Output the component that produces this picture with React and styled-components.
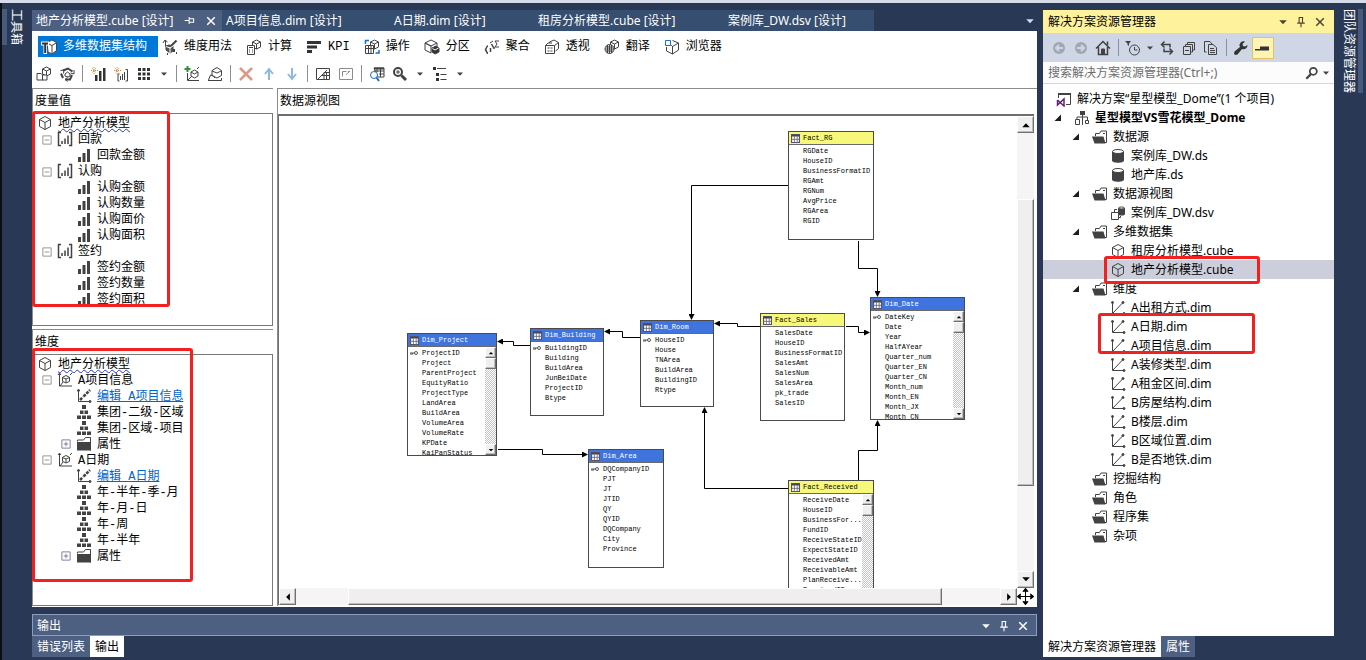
import React from 'react'
import styled, { createGlobalStyle, css } from 'styled-components'

const GlobalStyle = createGlobalStyle`
  * {
    box-sizing: border-box;
  }

  body {
    margin: 0;
    background: #293955;
    color: #000;
    font-family: "Noto Sans", "Noto Sans CJK SC", sans-serif;
    font-size: 12px;
    line-height: 16px;
  }

  button, input {
    font: inherit;
    color: inherit;
    border: 0;
    padding: 0;
    margin: 0;
    background: transparent;
  }

  svg {
    display: block;
    flex: none;
  }
`;

const designerFont = css`
  font-family: "Liberation Mono", "Noto Sans CJK SC", monospace;
`;

/* ---------- shell ---------- */

const Shell = styled.div`
  height: 100vh;
  min-height: 600px;
  display: grid;
  grid-template-columns: 32px minmax(0, 1fr) 291px 32px;
  border-top: 3px solid #d6dbe9;
  background: #293955;
  overflow: hidden;
`;

const Rail = styled.aside`
  display: flex;
  justify-content: space-between;
  align-items: flex-start;
  padding-top: 6px;
  border-left: ${(p) => (p.$left ? '2px solid #0b0f18' : '0')};
`;

const RailTab = styled.button`
  writing-mode: vertical-rl;
  text-orientation: sideways;
  color: #fff;
  white-space: nowrap;
  line-height: 18px;
  padding: 0 ${(p) => (p.$left ? '6px' : '0')} 0 ${(p) => (p.$left ? '0' : '6px')};
  border-${(p) => (p.$left ? 'left' : 'right')}: 5px solid #465a7d;
`;

const Center = styled.main`
  display: flex;
  flex-direction: column;
  min-width: 0;
  min-height: 0;
  padding: 7px 6px 3px 0;
`;

const DocTabs = styled.nav`
  display: flex;
  height: 21px;
  flex: none;
  color: #fff;
`;

const DocTab = styled.button`
  display: flex;
  align-items: center;
  width: ${(p) => p.$width}px;
  padding: 0 4px;
  gap: 10px;
  white-space: nowrap;
  color: #fff;
  background: ${(p) => (p.$active ? '#4d6082' : '#364e6f')};
`;

const TabMenu = styled.button`
  margin-left: auto;
  padding-right: 2px;
  color: #d6dbe9;
`;

const Designer = styled.section`
  display: flex;
  flex-direction: column;
  flex: 1;
  min-height: 0;
  background: #fff;
  ${designerFont}
`;

const ViewTabs = styled.nav`
  display: flex;
  align-items: center;
  height: 31px;
  padding-left: 6px;
`;

const ViewTab = styled.button`
  display: flex;
  align-items: center;
  gap: 6px;
  height: 21px;
  padding: 0 11px 0 3px;
  margin-right: ${(p) => (p.$active ? '1px' : '0')};
  white-space: nowrap;
  color: ${(p) => (p.$active ? '#fff' : '#000')};
  background: ${(p) => (p.$active ? '#0078d7' : 'transparent')};

  span {
    padding-top: 1px;
  }
`;

const Toolbar = styled.div`
  display: flex;
  align-items: center;
  height: 23px;
  margin-bottom: 3px;
`;

const ToolButton = styled.button`
  display: flex;
  align-items: center;
  justify-content: center;
  width: ${(p) => p.$width || 23}px;
  height: 22px;
  color: #424242;
`;

const ToolDivider = styled.span`
  display: flex;
  justify-content: center;
  width: 8px;

  &::before {
    content: '';
    width: 1px;
    height: 17px;
    background: #8a8f9a;
  }
`;

/* ---------- workspace ---------- */

const Workspace = styled.div`
  flex: 1;
  min-height: 0;
  display: grid;
  grid-template-columns: 241px minmax(0, 1fr);
  gap: 4px;
  padding-bottom: 1px;
`;

const SideStack = styled.div`
  display: grid;
  grid-template-rows: 238fr 278fr;
  gap: 3px;
  min-height: 0;
`;

const Pane = styled.section`
  display: flex;
  flex-direction: column;
  min-width: 0;
  min-height: 0;
  border-top: 1px solid #8c8c8c;
  border-left: 1px solid #8c8c8c;
`;

const PaneTitle = styled.h2`
  margin: 0;
  padding: 1px 2px 0;
  flex: none;
  height: ${(p) => (p.$tall ? 25 : 24)}px;
  font-size: 12px;
  line-height: 24px;
  font-weight: 400;
`;

const TreeBox = styled.div`
  position: relative;
  flex: 1;
  min-height: 0;
  border: 1px solid #7a7a7a;
  border-left: 0;
`;

const TreeList = styled.ul`
  list-style: none;
  margin: 0;
  padding: 1px 0 0;
  height: ${(p) => (p.$clip ? '190px' : 'auto')};
  overflow: hidden;
`;

const TreeRow = styled.li`
  display: flex;
  align-items: center;
  height: 16px;
  gap: 5px;
  white-space: nowrap;
  padding-left: ${(p) => (p.$level === 0 ? 4 : p.$level * 19 - 11)}px;

  span, a {
    padding-top: 2px;
  }
`;

const Toggle = styled.button`
  display: flex;
  width: 11px;
  height: 11px;
  visibility: ${(p) => (p.$hidden ? 'hidden' : 'visible')};
`;

const RootLabel = styled.span`
  text-decoration: underline wavy #2a36b8 1px;
  text-underline-offset: 1px;
`;

const TreeLink = styled.a`
  color: #0066cc;
`;

const Mark = styled.div`
  position: absolute;
  left: ${(p) => p.$x}px;
  top: ${(p) => p.$y}px;
  width: ${(p) => p.$w}px;
  height: ${(p) => p.$h}px;
  border: 3px solid #f2201f;
  border-radius: 3px;
  pointer-events: none;
`;

/* ---------- diagram ---------- */

const DiagramFrame = styled.div`
  flex: 1;
  min-height: 0;
  display: grid;
  grid-template-columns: minmax(0, 1fr) 17px;
  grid-template-rows: minmax(0, 1fr) 17px;
  border-top: 2px solid #6e6e6e;
  border-left: 1px solid #6e6e6e;
  margin: 0 3px 1px 0;
`;

const Canvas = styled.div`
  position: relative;
  overflow: hidden;
  background: #fff;
`;

const Links = styled.svg`
  position: absolute;
  inset: 0;
`;

const Node = styled.article`
  position: absolute;
  left: ${(p) => p.$x}px;
  top: ${(p) => p.$y}px;
  width: ${(p) => p.$w}px;
  height: ${(p) => p.$h}px;
  display: flex;
  flex-direction: column;
  border: 1px solid #4a4a4a;
  background: #fff;
  overflow: hidden;
  font-size: 7px;
  line-height: 10px;
`;

const NodeHead = styled.header`
  display: flex;
  align-items: center;
  gap: 3px;
  flex: none;
  height: 13px;
  padding-left: 2px;
  border-bottom: 1px solid #6a6a6a;
  color: ${(p) => (p.$fact ? '#000' : '#fff')};
  background: ${(p) => (p.$fact ? '#f7f77a' : '#3f73de')};
`;

const NodeBody = styled.div`
  display: flex;
  flex: 1;
  min-height: 0;
`;

const Columns = styled.ul`
  flex: 1;
  min-width: 0;
  margin: 0;
  padding: 1px 0 0;
  list-style: none;
`;

const Column = styled.li`
  display: flex;
  align-items: center;
  height: 10px;
  padding-left: ${(p) => (p.$key ? '2px' : '14px')};
  gap: 4px;
  white-space: nowrap;
`;

const ScrollTrack = styled.div`
  display: flex;
  flex-direction: ${(p) => (p.$horizontal ? 'row' : 'column')};
  width: ${(p) => (p.$mini ? '11px' : 'auto')};
  background: ${(p) => (p.$mini
    ? 'conic-gradient(#c4c4c4 25%, #fff 0 50%, #c4c4c4 0 75%, #fff 0) 0 0 / 2px 2px'
    : '#f6f4f5')};
`;

const ScrollButton = styled.button`
  display: flex;
  align-items: center;
  justify-content: center;
  flex: none;
  width: ${(p) => (p.$mini ? 11 : 17)}px;
  height: ${(p) => (p.$mini ? 11 : 17)}px;
  background: #f0f0f0;
  border: 1px solid #fff;
  border-right-color: #6f6f6f;
  border-bottom-color: #6f6f6f;
  box-shadow: inset -1px -1px #bdbdbd;
`;

const ScrollSpace = styled.div`
  flex: ${(p) => p.$size} 0 0;
`;

const ScrollThumb = styled.div`
  flex: ${(p) => (p.$size ? `${p.$size} 0 0` : '0 0 11px')};
  background: #f0eeee;
  border: 1px solid #fff;
  border-right-color: #6f6f6f;
  border-bottom-color: #6f6f6f;
  box-shadow: inset -1px -1px #bdbdbd;
`;

/* ---------- output ---------- */

const OutputBar = styled.section`
  display: flex;
  align-items: center;
  flex: none;
  height: 22px;
  margin-top: 7px;
  padding: 2px 7px 0 4px;
  gap: 7px;
  border: 1px solid #8e9bbc;
  background: #4d6082;
  color: #fff;
`;

const BarTitle = styled.h2`
  margin: 0 auto 0 0;
  font-size: 12px;
  font-weight: 400;
`;

const BarButton = styled.button`
  display: flex;
`;

const ToolTabs = styled.nav`
  display: flex;
  flex: none;
  height: 21px;
`;

const ToolTab = styled.button`
  padding: 0 5px;
  height: 21px;
  color: ${(p) => (p.$active ? '#000' : '#fff')};
  background: ${(p) => (p.$active ? '#fff' : '#4d6082')};
`;

/* ---------- solution explorer ---------- */

const Explorer = styled.section`
  display: flex;
  flex-direction: column;
  min-height: 0;
  padding: 7px 0 3px;
`;

const ExplorerTitle = styled.header`
  display: flex;
  align-items: center;
  flex: none;
  height: 23px;
  padding: 0 8px 0 5px;
  gap: 7px;
  background: #fff29d;
  color: #4b4436;

  h2 {
    color: #000;
  }
`;

const ExplorerTools = styled.div`
  display: flex;
  align-items: center;
  flex: none;
  height: 29px;
  padding-left: 5px;
  background: #cfd6e5;
`;

const PinnedTool = styled(ToolButton)`
  border: 1px solid #e5c365;
  background: #fff4b5;
`;

const SearchBox = styled.label`
  display: flex;
  align-items: center;
  flex: none;
  height: 22px;
  padding: 0 4px 0 5px;
  gap: 3px;
  background: #fcfcfc;
  color: #424242;
  border-bottom: 1px solid #cfd6e5;
`;

const SearchInput = styled.input`
  flex: 1;
  min-width: 0;
  outline: none;

  &::placeholder {
    color: #6d6d6d;
    opacity: 1;
  }
`;

const Solution = styled.div`
  position: relative;
  flex: 1;
  min-height: 0;
  background: #fff;
`;

const SolutionList = styled.ul`
  list-style: none;
  margin: 0;
  padding: 5px 0 0;
`;

const SolutionRow = styled.li`
  display: flex;
  align-items: center;
  height: 19px;
  white-space: nowrap;
  padding-left: ${(p) => (p.$level === 0 ? 13 : p.$level * 18 - 7)}px;
  font-weight: ${(p) => (p.$level === 1 ? 700 : 400)};
  background: ${(p) => (p.$selected ? '#cccedb' : 'transparent')};

  span {
    padding-left: 5px;
  }
`;

const Expander = styled.button`
  display: flex;
  width: 20px;
`;

/* ---------- icons ---------- */

const cube = 'M8 1.5l5.5 3v7L8 14.5l-5.5-3v-7zM2.5 4.5L8 7.5l5.5-3M8 7.5v7';
const smallCube = 'M10.5 1l4 2v5l-4 2-4-2V3zM6.5 3l4 2 4-2M10.5 5v5';

const shapes = {
  cube: <path d={cube} />,
  structure: (
    <>
      <path d="M6 3.5l5-2.5 4.500 2.500v8L11 15l-4-2z" fill="#fff" />
      <path d="M11 6.500V14M7 4.500l4 2 4-2.500" />
      <path d="M0 2.500h8v4H6v8.500H2.500V6.500H0z" fill="#fff" stroke="none" />
      <path d="M1 4.500h6M4.200 4v10" strokeWidth="2" stroke="#333" />
    </>
  ),
  usage: (
    <>
      <path d="M3.500 1.500v6M1 4l2-3 2.500 2" />
      <path d="M14.500 1.500L9 7" strokeWidth="2" />
      <path d="M4 7l3-1 4 1v5l-3 2-4-3z" fill="#555" />
      <path d="M8 8v6M4 7.500l4 1.500 3-2" stroke="#fff" />
      <path d="M12 10v3M14 14h1M5 15h1" strokeWidth="2" />
    </>
  ),
  calc: (
    <>
      <path d={smallCube} />
      <path d="M1.500 6.500h7v9h-7z" fill="#fff" />
      <path d="M3 8.500h4M3 11h1M6 11h1M3 13h1M6 13h1" />
    </>
  ),
  kpi: <path d="M1 2h14v3H1zM1 6.500h10v3H1zM1 11h5v3H1z" fill="#333" stroke="none" />,
  actions: (
    <>
      <path d={smallCube} />
      <path d="M1.500 6.500h8v8h-8zM1.500 9.500h8M4.500 6.500v8M7 6.500v8" fill="#fff" />
      <path d="M1.500 5V1.500H5M15 11v3h-3.500" stroke="#1b6fc0" strokeWidth="1.500" />
    </>
  ),
  partition: (
    <>
      <path d="M7 1l6 3v4M1 4v7l6 3V7zM1 4l6-3M1 4l6 3 6-3" />
      <path d="M8 9l4-2 3 2v4l-4 2-3-2z" fill="#333" />
      <path d="M8.500 9.500L11 11l3.500-2" stroke="#fff" />
    </>
  ),
  aggregate: (
    <>
      <path d="M4 7c-2 0-1 3-3 3.500 2 .5 1 3.500 3 4M7.500 5l2 3.500M6.500 9v4M10 8v2" strokeWidth="1.500" />
      <path d="M15 2h-4l2 3-2 3h4M6 4l3-2" />
    </>
  ),
  perspective: (
    <>
      <path d="M5.500 4V3L10 1l4.500 2.500v6L11.500 12" />
      <path d="M1.500 6.500h9v8h-9z" />
      <path d="M3.500 9h5M3.500 12h5" strokeDasharray="2 1" />
      <path d="M10.500 6.500l4-3M1.500 6.500L4 4h4" />
    </>
  ),
  translate: (
    <>
      <path d={smallCube} />
      <circle cx="5.500" cy="10" r="4.500" fill="#fff" />
      <path d="M1 10h9M5.500 5.500v9M3.500 6v8M7.500 6v8M2 8h7M2 12h7" />
    </>
  ),
  browser: (
    <>
      <path d="M8.500 1.500l6 2.500v7l-6 4-6-3V8M8.500 7v8M8.500 7.500l6-3.500" />
      <path d="M1.500 1.500h5v5h-5z" stroke="#1b6fc0" />
      <path d="M6.500 5.500l2 2" stroke="#1b6fc0" />
    </>
  ),
  newCube: (
    <>
      <path d={smallCube} />
      <path d="M1 7.500h4l1.500 1.500v5H1zM6 9h5v5H6" fill="#fff" />
    </>
  ),
  process: (
    <>
      <path d="M4 4.500l5-2 4.500 3M13 9l-2 4.500H6.500M4 12L2 7.500" strokeWidth="2" />
      <path d="M1.500 4.500l3.500-.5-.5 3.500M15 4v4l-3.500-1M8.500 11.500l-2.500 2 2.500 2M6 8l2.500-2L11 8v2l-2 1-3-1z" />
    </>
  ),
  newGroup: (
    <>
      <path d="M5 9h2.500v6H5zM9 5h2.500v10H9zM13 2h2.500v13H13z" fill="#333" stroke="none" />
      <path d="M4 1v7M1 4.500h7M2 2l4 5M6 2L2 7" stroke="#d08a3a" strokeDasharray="1 1" />
    </>
  ),
  newMeasure: (
    <>
      <path d="M7.500 10v4M9.500 8v6M11.500 6v8M6.500 8H5v7h1.500M12.500 3.500h2V15h-2" />
      <path d="M4 1v7M1 4.500h7M2 2l4 5M6 2L2 7" stroke="#d08a3a" strokeDasharray="1 1" />
    </>
  ),
  grid: <path d="M2 2h3v3H2zM6.5 2h3v3h-3zM11 2h3v3h-3zM2 6.5h3v3H2zM6.5 6.5h3v3h-3zM11 6.5h3v3h-3zM2 11h3v3H2zM6.5 11h3v3h-3zM11 11h3v3h-3z" fill="#333" stroke="none" />,
  addDimension: (
    <>
      <path d="M3.500 7v7.500H15M7 6l3.500-2L14 6v4l-3.500 2L7 10zM7 6l3.500 2L14 6M4 14l4-4M13 3l2-2" />
      <path d="M3.500 0v6M.5 3h6" stroke="#2f8f3a" strokeWidth="2" />
    </>
  ),
  attribute: <path d="M5 4.500l5-3 4.500 3v5L10 12l-5-2.500zM5 5l5 2 4-2M1.500 14l2-5 2.500.5L8 12M1 14.500h13.500V12" />,
  remove: <path d="M2 2l12 12M14 2L2 14" stroke="#d99a8a" strokeWidth="2.500" />,
  up: <path d="M8 14V4M4 8l4-5 4 5" stroke="#8fb8e0" strokeWidth="2" />,
  down: <path d="M8 2v10M4 8l4 5 4-5" stroke="#8fb8e0" strokeWidth="2" />,
  showTables: <path d="M1.500 2.500h13v11h-13zM3 13l9-9M7 9.500h7M9 13V6.500h5M11.500 6v7" />,
  hideTables: <path d="M1.500 2.500h13v11h-13zM4.500 5.500h4M4.500 5.500v5M10 5.500h2M8 8.500L11 6" stroke="#8c8c8c" />,
  find: (
    <>
      <path d="M5 2h10v9H9zM5 5h10M8 2v4M11.500 2v9M10 8h5" />
      <path d="M5 2.500h10" strokeWidth="2" />
      <circle cx="5" cy="9" r="3.500" fill="#fff" stroke="#1b6fc0" />
      <path d="M7.500 11.500L10 15" stroke="#1b6fc0" strokeWidth="2" />
    </>
  ),
  zoom: (
    <>
      <circle cx="6" cy="6" r="4" strokeWidth="2" />
      <path d="M9.500 9.500L14 14" strokeWidth="3" />
      <path d="M4 6h4M6 4v4" />
    </>
  ),
  outline: (
    <>
      <path d="M1 1h3v3H1zM4 7h3v3H4zM4 12h3v3H4z" fill="#333" stroke="none" />
      <path d="M5 2.500h9M8.500 8.500h6M8.500 13.500h6" />
    </>
  ),
  measureGroup: <path d="M4 1.5H1.500v13H4M12 1.500h2.500v13H12M5 10v3M8 7.500V13M11 4.500V13" strokeWidth="1.500" />,
  measure: <path d="M2 10h3v5H2zM6.500 6h3v9h-3zM11 2h3v13h-3z" fill="#424242" stroke="none" />,
  dimension: (
    <>
      <path d="M2.500 2v12H15M1 3l1.500-2L4 3M13 3l2-2" />
      <path d="M9 3.500l3.500 1.800v4L9 11 5.500 9.300v-4zM5.500 5.500L9 7l3.500-1.500M9 7v4M3 14l3-4" />
    </>
  ),
  edit: (
    <>
      <path d="M2.500 2v11.500H14" />
      <circle cx="2.500" cy="2.500" r="1" fill="#424242" />
      <circle cx="14" cy="13.500" r="1" fill="#424242" />
      <path d="M4 12l3-3M7.500 8.500L14 2" strokeWidth="2.500" strokeDasharray="3 1" />
    </>
  ),
  hierarchy: <path d="M6 1h4v4H6zM4 6.5h3.5v3.5H4zM8.500 6.500H12v3.500H8.500zM1 11.500h4v3.500H1zM6 11.500h4v3.500H6zM11 11.500h4v3.500h-4z" fill="#424242" stroke="none" />,
  folder: (
    <>
      <path d="M1.500 5.500V4h6l2-2.500h5v13" fill="#fff" />
      <path d="M1 6h13l1 8.500H1z" fill="#424242" stroke="none" />
    </>
  ),
  openFolder: (
    <>
      <path d="M3.500 7V4.500h4L9 2h5.500v11.500H13M11 4.500h2" fill="#fff" />
      <path d="M0 7.500h11.500l2 7H2.500z" fill="#424242" stroke="none" />
    </>
  ),
  database: (
    <>
      <path d="M2 3.500v9c0 3 12 3 12 0v-9z" fill="#424242" stroke="none" />
      <ellipse cx="8" cy="3.500" rx="5.500" ry="2" fill="#fff" />
    </>
  ),
  view: (
    <>
      <path d="M1.500 7.500h7v7h-7zM8.500 12.500h2V11M4.500 7V4.500H7" />
      <path d="M8 3v6c0 2 7 2 7 0V3z" fill="#424242" stroke="none" />
      <ellipse cx="11.500" cy="3" rx="3" ry="1" fill="#fff" />
    </>
  ),
  axes: (
    <>
      <path d="M2.500 3v10.500H14M3 13L12.500 3" />
      <circle cx="2.500" cy="2.500" r="1" fill="#424242" />
      <circle cx="13" cy="2.500" r="1" fill="#424242" />
      <circle cx="14" cy="13.500" r="1" fill="#424242" />
    </>
  ),
  solution: (
    <>
      <path d="M2.500 7V2.500h12v11H10" />
      <path d="M2 3h13" strokeWidth="2" />
      <path d="M1.500 9v5L8 8v7L1.500 9" stroke="#68217a" strokeWidth="1.500" />
    </>
  ),
  project: (
    <>
      <path d="M6 1h5v4H6z" fill="#424242" stroke="none" />
      <path d="M8.500 5v10M3 9V7h10.500v3M1.500 9.500h4v5h-4zM11.500 10.500h3v3h-3z" />
    </>
  ),
  back: (
    <>
      <circle cx="8" cy="8" r="6" fill="#a3a7b0" stroke="none" />
      <path d="M12 8H5M8 5L5 8l3 3" stroke="#cfd6e5" strokeWidth="2" />
    </>
  ),
  forward: (
    <>
      <circle cx="8" cy="8" r="6" fill="#a3a7b0" stroke="none" />
      <path d="M4 8h7M8 5l3 3-3 3" stroke="#cfd6e5" strokeWidth="2" />
    </>
  ),
  home: (
    <>
      <path d="M1 8.500l7-7 7 7M3.500 7v7.500h9V7M12.500 5V1.500" strokeWidth="1.500" />
      <path d="M6.500 9h3v5h-3z" fill="#424242" />
    </>
  ),
  clock: (
    <>
      <circle cx="9.500" cy="10" r="5" />
      <path d="M9.500 7v3h3" />
      <path d="M0 1h6L4 3.500V6L2.500 5V3.500z" fill="#424242" stroke="none" />
    </>
  ),
  sync: <path d="M2.500 4.500H11v3M5.500 1.500l-3 3 3 3M13.500 11.500H5v-3M10.500 8.500l3 3-3 3" strokeWidth="1.500" />,
  collapse: <path d="M2.500 6.500h7v8h-7zM4 10.500h4M4.500 6V4.500h7V12H10M6.500 4V2.500h7V10H12" />,
  files: <path d="M5.500 4.500H10l3.500 3v7h-8zM7 8.500h4M7 10.500h5M7 12.500h5M3.500 12h-2V1.500H7L9 4" />,
  wrench: <path d="M14.500 5a4 4 0 0 1-5.500 4L4.500 14.500 2 15l-1-1.500.5-2L7 7A4 4 0 0 1 12 1.500L9.500 4l.5 2 2 .5z" fill="#333" stroke="none" />,
  preview: <path d="M0 9h5v1.500H0zM5 6.500h9v4H5z" fill="#333" stroke="none" />,
  search: (
    <>
      <circle cx="9.500" cy="6" r="4" strokeWidth="2" />
      <path d="M7 9l-5.500 5.500" strokeWidth="2.500" />
    </>
  ),
  minus: <path d="M2.5 2.5h11v11h-11zM5 8h6" stroke="#777" />,
  plus: <path d="M2.5 2.5h11v11h-11zM5 8h6M8 5v6" stroke="#5a5a90" />,
  close: <path d="M3 3l10 10M13 3L3 13" stroke="currentColor" strokeWidth="2" />,
  pin: <path d="M5 2h6M5.5 2v7M10 2v7M3 9.500h10M8 10v5" stroke="currentColor" strokeWidth="1.500" />,
  pinSide: <path d="M1 8h6M7.500 3v10M8 5.500h6v5H8" stroke="currentColor" strokeWidth="1.500" />,
  caret: <path d="M2 5h12l-6 6.500z" fill="currentColor" stroke="none" />,
  caretUp: <path d="M2 11.500h12L8 5z" fill="#000" stroke="none" />,
  caretLeft: <path d="M11 2v12L5 8z" fill="#000" stroke="none" />,
  caretRight: <path d="M5 2v12l6-6z" fill="#000" stroke="none" />,
  expanded: <path d="M14 1v13H1z" fill="#1e1e1e" stroke="none" />,
  move: <path d="M8 1v14M1 8h14M5.500 3.500L8 .5l2.500 3M5.500 12.500l2.500 3 2.500-3M3.500 5.500L.5 8l3 2.500M12.500 5.500l3 2.500-3 2.500" stroke="#000" fill="#000" strokeWidth="1" />,
  table: (
    <>
      <path d="M1 1h14v14H1z" fill="#fff" stroke="#556" strokeWidth="2" />
      <path d="M1 3h14" stroke="#445" strokeWidth="3" />
      <path d="M1 9.500h14M6 4v11M11 4v11" stroke="#667" strokeWidth="1.500" />
    </>
  ),
  key: (
    <>
      <circle cx="12" cy="8" r="3" stroke="#555" strokeWidth="2" />
      <path d="M0 8h9M2 8v4M5 8v3" stroke="#555" strokeWidth="2" />
    </>
  ),
};

function Icon({ name, size = 16 }) {
  return (
    <svg width={size} height={size} viewBox="0 0 16 16" fill="none" stroke="#424242" aria-hidden="true">
      {shapes[name]}
    </svg>
  )
}

/* ---------- data ---------- */

const docTabs = [
  { title: '地产分析模型.cube [设计]', width: 190, active: true },
  { title: 'A项目信息.dim [设计]', width: 168 },
  { title: 'A日期.dim [设计]', width: 144 },
  { title: '租房分析模型.cube [设计]', width: 190 },
  { title: '案例库_DW.dsv [设计]', width: 150 },
];

const viewTabs = [
  ['structure', '多维数据集结构'],
  ['usage', '维度用法'],
  ['calc', '计算'],
  ['kpi', 'KPI'],
  ['actions', '操作'],
  ['partition', '分区'],
  ['aggregate', '聚合'],
  ['perspective', '透视'],
  ['translate', '翻译'],
  ['browser', '浏览器'],
];

const tools = [
  'newCube', 'process', '|', 'newGroup', 'newMeasure', 'grid', 'v', '|',
  'addDimension', 'attribute', '|', 'remove', 'up', 'down', '|',
  'showTables', 'hideTables', '|', 'find', 'zoom', 'v', 'outline', 'v',
];

const explorerTools = [
  'back', 'forward', 'home', '|', 'clock', 'v', 'sync', 'collapse', 'files', '|', 'wrench',
];

const measures = [
  { level: 0, icon: 'cube', text: '地产分析模型' },
  { level: 1, icon: 'measureGroup', text: '回款', toggle: 'minus' },
  { level: 2, icon: 'measure', text: '回款金额' },
  { level: 1, icon: 'measureGroup', text: '认购', toggle: 'minus' },
  { level: 2, icon: 'measure', text: '认购金额' },
  { level: 2, icon: 'measure', text: '认购数量' },
  { level: 2, icon: 'measure', text: '认购面价' },
  { level: 2, icon: 'measure', text: '认购面积' },
  { level: 1, icon: 'measureGroup', text: '签约', toggle: 'minus' },
  { level: 2, icon: 'measure', text: '签约金额' },
  { level: 2, icon: 'measure', text: '签约数量' },
  { level: 2, icon: 'measure', text: '签约面积' },
];

const dimensions = [
  { level: 0, icon: 'cube', text: '地产分析模型' },
  { level: 1, icon: 'dimension', text: 'A项目信息', toggle: 'minus' },
  { level: 2, icon: 'edit', text: '编辑 A项目信息', link: true },
  { level: 2, icon: 'hierarchy', text: '集团-二级-区域' },
  { level: 2, icon: 'hierarchy', text: '集团-区域-项目' },
  { level: 2, icon: 'folder', text: '属性', toggle: 'plus' },
  { level: 1, icon: 'dimension', text: 'A日期', toggle: 'minus' },
  { level: 2, icon: 'edit', text: '编辑 A日期', link: true },
  { level: 2, icon: 'hierarchy', text: '年-半年-季-月' },
  { level: 2, icon: 'hierarchy', text: '年-月-日' },
  { level: 2, icon: 'hierarchy', text: '年-周' },
  { level: 2, icon: 'hierarchy', text: '年-半年' },
  { level: 2, icon: 'folder', text: '属性', toggle: 'plus' },
];

const nodes = [
  { name: 'Fact_RG', fact: true, x: 509, y: 15, w: 86, h: 109,
    columns: ['RGDate', 'HouseID', 'BusinessFormatID', 'RGAmt', 'RGNum', 'AvgPrice', 'RGArea', 'RGID'] },
  { name: 'Dim_Date', key: true, scroll: true, x: 591, y: 181, w: 95, h: 123,
    columns: ['DateKey', 'Date', 'Year', 'HalfAYear', 'Quarter_num', 'Quarter_EN', 'Quarter_CN', 'Month_num', 'Month_EN', 'Month_JX', 'Month_CN'] },
  { name: 'Fact_Sales', fact: true, x: 481, y: 197, w: 85, h: 108,
    columns: ['SalesDate', 'HouseID', 'BusinessFormatID', 'SalesAmt', 'SalesNum', 'SalesArea', 'pk_trade', 'SalesID'] },
  { name: 'Dim_Room', key: true, x: 361, y: 204, w: 74, h: 87,
    columns: ['HouseID', 'House', 'TNArea', 'BuildArea', 'BuildingID', 'Rtype'] },
  { name: 'Dim_Building', key: true, x: 251, y: 212, w: 74, h: 88,
    columns: ['BuildingID', 'Building', 'BuildArea', 'JunBeiDate', 'ProjectID', 'Btype'] },
  { name: 'Dim_Project', key: true, scroll: true, x: 128, y: 217, w: 90, h: 123,
    columns: ['ProjectID', 'Project', 'ParentProject', 'EquityRatio', 'ProjectType', 'LandArea', 'BuildArea', 'VolumeArea', 'VolumeRate', 'KPDate', 'KaiPanStatus'] },
  { name: 'Dim_Area', key: true, x: 309, y: 333, w: 76, h: 119,
    columns: ['DQCompanyID', 'PJT', 'JT', 'JTID', 'QY', 'QYID', 'DQCompany', 'City', 'Province'] },
  { name: 'Fact_Received', fact: true, scroll: true, x: 509, y: 364, w: 86, h: 123,
    columns: ['ReceiveDate', 'HouseID', 'BusinessFor...', 'FundID', 'ReceiveStateID', 'ExpectStateID', 'ReceivedAmt', 'ReceivableAmt', 'PlanReceive...', 'ReceivedID'] },
];

const links = [
  'M509 69.5H412.5V203',
  'M579.5 125V152.5H598.5V180',
  'M481 210.5H458.5V207.5H436',
  'M567 210.5H579.5V216.5H590',
  'M361 221.5H343.5V215.5H326',
  'M251 229.5H234.5V225.5H219',
  'M219 333.5H263.5V338.5H308',
  'M509 372.5H425.5V292',
  'M579.5 364V334.5H598.5V305',
];

const solutionItems = [
  { level: 0, icon: 'solution', text: '解决方案“星型模型_Dome”(1 个项目)' },
  { level: 1, icon: 'project', text: '星型模型VS雪花模型_Dome', open: true },
  { level: 2, icon: 'openFolder', text: '数据源', open: true },
  { level: 3, icon: 'database', text: '案例库_DW.ds' },
  { level: 3, icon: 'database', text: '地产库.ds' },
  { level: 2, icon: 'openFolder', text: '数据源视图', open: true },
  { level: 3, icon: 'view', text: '案例库_DW.dsv' },
  { level: 2, icon: 'openFolder', text: '多维数据集', open: true },
  { level: 3, icon: 'cube', text: '租房分析模型.cube' },
  { level: 3, icon: 'cube', text: '地产分析模型.cube', selected: true },
  { level: 2, icon: 'openFolder', text: '维度', open: true },
  { level: 3, icon: 'axes', text: 'A出租方式.dim' },
  { level: 3, icon: 'axes', text: 'A日期.dim' },
  { level: 3, icon: 'axes', text: 'A项目信息.dim' },
  { level: 3, icon: 'axes', text: 'A装修类型.dim' },
  { level: 3, icon: 'axes', text: 'A租金区间.dim' },
  { level: 3, icon: 'axes', text: 'B房屋结构.dim' },
  { level: 3, icon: 'axes', text: 'B楼层.dim' },
  { level: 3, icon: 'axes', text: 'B区域位置.dim' },
  { level: 3, icon: 'axes', text: 'B是否地铁.dim' },
  { level: 2, icon: 'openFolder', text: '挖掘结构' },
  { level: 2, icon: 'openFolder', text: '角色' },
  { level: 2, icon: 'openFolder', text: '程序集' },
  { level: 2, icon: 'openFolder', text: '杂项' },
];

/* ---------- parts ---------- */

function Tools({ items, width, caretWidth }) {
  return items.map((item, i) => {
    if (item === '|') return <ToolDivider key={i} />
    if (item === 'v') {
      return (
        <ToolButton key={i} $width={caretWidth} aria-label="更多">
          <Icon name="caret" size={8} />
        </ToolButton>
      )
    }
    return (
      <ToolButton key={i} $width={width} aria-label={item}>
        <Icon name={item} />
      </ToolButton>
    )
  })
}

function Tree({ items, clip }) {
  return (
    <TreeList $clip={clip}>
      {items.map((item, i) => (
        <TreeRow key={i} $level={item.level}>
          {item.level > 0 && (
            <Toggle $hidden={!item.toggle} aria-label={item.text}>
              <Icon name={item.toggle || 'minus'} size={12} />
            </Toggle>
          )}
          <Icon name={item.icon} />
          {item.level === 0 && <RootLabel>{item.text}</RootLabel>}
          {item.level > 0 && (item.link ? <TreeLink href="#">{item.text}</TreeLink> : <span>{item.text}</span>)}
        </TreeRow>
      ))}
    </TreeList>
  )
}

function TableNode({ node }) {
  return (
    <Node $x={node.x} $y={node.y} $w={node.w} $h={node.h}>
      <NodeHead $fact={node.fact}>
        <Icon name="table" size={9} />
        {node.name}
      </NodeHead>
      <NodeBody>
        <Columns>
          {node.columns.map((column, i) => (
            <Column key={column} $key={node.key && i === 0}>
              {node.key && i === 0 && <Icon name="key" size={8} />}
              {column}
            </Column>
          ))}
        </Columns>
        {node.scroll && (
          <ScrollTrack $mini>
            <ScrollButton $mini aria-label="向上滚动"><Icon name="caretUp" size={6} /></ScrollButton>
            <ScrollThumb />
            <ScrollSpace $size={1} />
            <ScrollButton $mini aria-label="向下滚动"><Icon name="caret" size={6} /></ScrollButton>
          </ScrollTrack>
        )}
      </NodeBody>
    </Node>
  )
}

function Diagram() {
  return (
    <DiagramFrame>
      <Canvas>
        <Links width="100%" height="100%">
          <defs>
            <marker id="arrow" markerWidth="7" markerHeight="6" refX="5" refY="3" orient="auto" markerUnits="userSpaceOnUse">
              <path d="M0 0L6 3L0 6z" fill="#000" />
            </marker>
          </defs>
          {links.map((d) => (
            <path key={d} d={d} fill="none" stroke="#000" markerEnd="url(#arrow)" />
          ))}
        </Links>
        {nodes.map((node) => <TableNode key={node.name} node={node} />)}
      </Canvas>
      <ScrollTrack>
        <ScrollButton aria-label="向上滚动"><Icon name="caretUp" size={10} /></ScrollButton>
        <ScrollSpace $size={66} />
        <ScrollThumb $size={287} />
        <ScrollSpace $size={86} />
        <ScrollButton aria-label="向下滚动"><Icon name="caret" size={10} /></ScrollButton>
      </ScrollTrack>
      <ScrollTrack $horizontal>
        <ScrollButton aria-label="向左滚动"><Icon name="caretLeft" size={10} /></ScrollButton>
        <ScrollSpace $size={52} />
        <ScrollThumb $size={594} />
        <ScrollSpace $size={58} />
        <ScrollButton aria-label="向右滚动"><Icon name="caretRight" size={10} /></ScrollButton>
      </ScrollTrack>
      <Icon name="move" size={17} />
    </DiagramFrame>
  )
}

function App() {
  return (
    <Shell>
      <GlobalStyle />
      <Rail $left>
        <RailTab $left>工具箱</RailTab>
      </Rail>

      <Center>
        <DocTabs>
          {docTabs.map((tab) => (
            <DocTab key={tab.title} $width={tab.width} $active={tab.active}>
              {tab.title}
              {tab.active && (
                <>
                  <Icon name="pinSide" size={11} />
                  <Icon name="close" size={12} />
                </>
              )}
            </DocTab>
          ))}
          <TabMenu aria-label="打开的文档"><Icon name="caret" size={10} /></TabMenu>
        </DocTabs>

        <Designer>
          <ViewTabs>
            {viewTabs.map(([icon, text], i) => (
              <ViewTab key={icon} $active={i === 0}>
                <Icon name={icon} />
                <span>{text}</span>
              </ViewTab>
            ))}
          </ViewTabs>
          <Toolbar>
            <Tools items={tools} width={23} caretWidth={17} />
          </Toolbar>

          <Workspace>
            <SideStack>
              <Pane>
                <PaneTitle>度量值</PaneTitle>
                <TreeBox>
                  <Tree items={measures} clip />
                  <Mark $x={-1} $y={-3} $w={138} $h={196} />
                </TreeBox>
              </Pane>
              <Pane>
                <PaneTitle>维度</PaneTitle>
                <TreeBox>
                  <Tree items={dimensions} />
                  <Mark $x={-1} $y={-7} $w={161} $h={234} />
                </TreeBox>
              </Pane>
            </SideStack>
            <Pane>
              <PaneTitle $tall>数据源视图</PaneTitle>
              <Diagram />
            </Pane>
          </Workspace>
        </Designer>

        <OutputBar>
          <BarTitle>输出</BarTitle>
          <BarButton aria-label="窗口位置"><Icon name="caret" size={10} /></BarButton>
          <BarButton aria-label="自动隐藏"><Icon name="pin" size={12} /></BarButton>
          <BarButton aria-label="关闭"><Icon name="close" size={12} /></BarButton>
        </OutputBar>
        <ToolTabs>
          <ToolTab>错误列表</ToolTab>
          <ToolTab $active>输出</ToolTab>
        </ToolTabs>
      </Center>

      <Explorer>
        <ExplorerTitle>
          <BarTitle>解决方案资源管理器</BarTitle>
          <BarButton aria-label="窗口位置"><Icon name="caret" size={10} /></BarButton>
          <BarButton aria-label="自动隐藏"><Icon name="pin" size={12} /></BarButton>
          <BarButton aria-label="关闭"><Icon name="close" size={12} /></BarButton>
        </ExplorerTitle>
        <ExplorerTools>
          <Tools items={explorerTools} width={22} caretWidth={12} />
          <PinnedTool $width={22} aria-label="预览选定项"><Icon name="preview" /></PinnedTool>
        </ExplorerTools>
        <SearchBox>
          <SearchInput type="text" placeholder="搜索解决方案资源管理器(Ctrl+;)" />
          <Icon name="search" size={14} />
          <Icon name="caret" size={8} />
        </SearchBox>
        <Solution>
          <SolutionList>
            {solutionItems.map((item) => (
              <SolutionRow key={item.text} $level={item.level} $selected={item.selected}>
                {item.level > 0 && (
                  <Expander aria-label={item.text}>
                    {item.open && <Icon name="expanded" size={8} />}
                  </Expander>
                )}
                <Icon name={item.icon} />
                <span>{item.text}</span>
              </SolutionRow>
            ))}
          </SolutionList>
          <Mark $x={61} $y={172} $w={156} $h={28} />
          <Mark $x={55} $y={229} $w={157} $h={41} />
        </Solution>
        <ToolTabs>
          <ToolTab $active>解决方案资源管理器</ToolTab>
          <ToolTab>属性</ToolTab>
        </ToolTabs>
      </Explorer>

      <Rail>
        <RailTab>团队资源管理器</RailTab>
      </Rail>
    </Shell>
  )
}

export default App
